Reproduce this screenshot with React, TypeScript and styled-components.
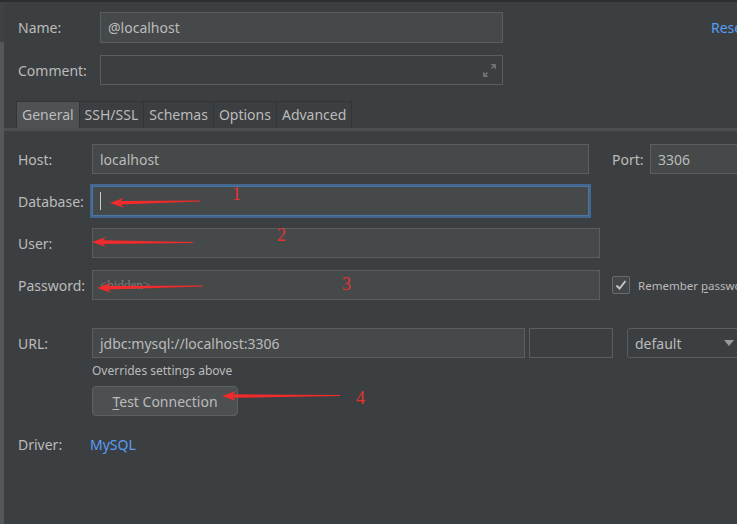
import styled, { createGlobalStyle } from "styled-components";

const GlobalStyle = createGlobalStyle`
  body {
    margin: 0;
    background: #3c3f41;
    overflow: hidden;
  }
`;

const Page = styled.div`
  position: relative;
  display: flex;
  width: 737px;
  height: 524px;
  box-sizing: border-box;
  border-top: 2px solid #2b2d2f;
  background: #3c3f41;
  overflow: hidden;
  font-family: "Noto Sans", "Open Sans", sans-serif;
  font-size: 14px;
  color: #bbbbbb;
`;

const ScrollStrip = styled.div`
  width: 4px;
  flex-shrink: 0;
  background: linear-gradient(#3f4244 0 40px, #55585a 40px);
`;

const Content = styled.div`
  flex: 1;
  min-width: 0;
  display: flex;
  flex-direction: column;
`;

const Header = styled.div`
  display: grid;
  grid-template-columns: 82px 403px auto;
  grid-template-rows: 31px 30px;
  row-gap: 12px;
  align-items: center;
  padding: 10px 0 0 14px;
`;

const ResetLink = styled.span`
  margin-left: 208px;
  color: #589df6;
  white-space: nowrap;
`;

const TabBar = styled.div`
  display: flex;
  margin-top: 16px;
  padding-left: 12px;
  border-bottom: 3px solid #4b4f51;
`;

const Tab = styled.div<{ $active?: boolean }>`
  height: 27px;
  box-sizing: border-box;
  display: flex;
  align-items: center;
  padding: 0 5px 2px;
  margin-right: -1px;
  border: 1px solid #323436;
  border-bottom: none;
  background: ${({ $active }) => ($active ? "#4e5254" : "#3c3f41")};
  white-space: nowrap;
`;

const Panel = styled.div`
  display: flex;
  flex-direction: column;
  padding: 13px 0 0 14px;
`;

const Row = styled.div<{ $top?: number; $h?: number }>`
  display: flex;
  align-items: center;
  height: ${({ $h }) => $h ?? 30}px;
  margin-top: ${({ $top }) => $top ?? 0}px;
  white-space: nowrap;
`;

const Label = styled.span<{ $w?: number }>`
  width: ${({ $w }) => $w ?? 74}px;
  flex-shrink: 0;
`;

const Field = styled.div<{
  $w: number;
  $h?: number;
  $flat?: boolean;
  $focus?: boolean;
  $left?: number;
  $end?: boolean;
}>`
  width: ${({ $w }) => $w}px;
  height: ${({ $h }) => $h ?? 30}px;
  flex-shrink: 0;
  box-sizing: border-box;
  display: flex;
  align-items: center;
  justify-content: ${({ $end }) => ($end ? "flex-end" : "flex-start")};
  margin-left: ${({ $left }) => $left ?? 0}px;
  padding: 0 ${({ $end }) => ($end ? 5 : 7)}px 0 7px;
  border: 1px solid ${({ $focus }) => ($focus ? "#4a76a2" : "#5b5e5f")};
  box-shadow: ${({ $focus }) => ($focus ? "0 0 0 2px #42668d" : "none")};
  background: ${({ $flat }) => ($flat ? "#3c3f41" : "#45494a")};
  color: #bbbbbb;
  white-space: nowrap;
  overflow: hidden;
`;

const Caret = styled.span`
  width: 1px;
  height: 18px;
  background: #c8c8c8;
`;

const Placeholder = styled.span`
  font-family: "Liberation Serif", "DejaVu Serif", serif;
  font-size: 13px;
  color: #7c7c7c;
`;

const SideLabel = styled.span<{ $left: number; $w?: number }>`
  margin-left: ${({ $left }) => $left}px;
  width: ${({ $w }) => ($w ? `${$w}px` : "auto")};
  flex-shrink: 0;
`;

const CheckBox = styled.div`
  width: 18px;
  height: 18px;
  margin-left: 12px;
  flex-shrink: 0;
  box-sizing: border-box;
  border: 1px solid #6b6b6b;
  border-radius: 2px;
  background: #43474a;
  display: flex;
  align-items: center;
  justify-content: center;
`;

const CheckText = styled.span`
  margin-left: 8px;
  font-size: 11.5px;
  u {
    text-underline-offset: 2px;
  }
`;

const Combo = styled.div`
  width: 118px;
  height: 30px;
  margin-left: 14px;
  flex-shrink: 0;
  box-sizing: border-box;
  display: flex;
  align-items: center;
  justify-content: space-between;
  padding: 0 10px 0 7px;
  border: 1px solid #5b5e5f;
  border-radius: 3px;
  background: #3c3f41;
`;

const Triangle = styled.span`
  width: 0;
  height: 0;
  border-left: 5px solid transparent;
  border-right: 5px solid transparent;
  border-top: 6px solid #9a9a9a;
`;

const Hint = styled.div`
  margin: 6px 0 0 74px;
  font-size: 12px;
  line-height: 14px;
`;

const Button = styled.div`
  width: 146px;
  height: 30px;
  margin: 8px 0 0 74px;
  box-sizing: border-box;
  display: flex;
  align-items: center;
  justify-content: center;
  border: 1px solid #5e6162;
  border-radius: 4px;
  background: #4c5052;
  u {
    text-underline-offset: 2px;
  }
`;

const Link = styled.span`
  margin-left: -2px;
  color: #589df6;
`;

const Overlay = styled.svg`
  position: absolute;
  left: 0;
  top: -2px;
  pointer-events: none;
`;

const Num = styled.text`
  font-family: "Liberation Serif", "DejaVu Serif", serif;
  font-size: 18px;
  fill: #e8312f;
`;

const arrowPoints = (tx: number, ty: number, sx: number, sy: number) => {
  const len = Math.hypot(sx - tx, sy - ty);
  const dx = (sx - tx) / len;
  const dy = (sy - ty) / len;
  const nx = -dy;
  const ny = dx;
  const p = (x: number, y: number, a: number, b: number) =>
    `${(x + dx * a + nx * b).toFixed(1)},${(y + dy * a + ny * b).toFixed(1)}`;
  return [
    p(tx, ty, 0, 0),
    p(tx, ty, 14, 5),
    p(tx, ty, 11, 1.8),
    p(sx, sy, 0, 0.4),
    p(sx, sy, 0, -0.4),
    p(tx, ty, 11, -1.8),
    p(tx, ty, 14, -5),
  ].join(" ");
};

// red annotations drawn over the form
const arrows = [
  { tip: [110, 203], tail: [200, 201] },
  { tip: [92, 242], tail: [193, 242.5] },
  { tip: [97, 288], tail: [203, 286] },
  { tip: [222, 396], tail: [340, 395.5] },
];

const numbers = [
  { n: "1", x: 232, y: 200 },
  { n: "2", x: 277, y: 241 },
  { n: "3", x: 342, y: 290 },
  { n: "4", x: 356, y: 404 },
];

const ExpandIcon = () => (
  <svg width="15" height="15" viewBox="0 0 15 15">
    <path d="M14 1 L8.5 1 L14 6.5 Z" fill="#707070" />
    <path d="M13 2 L9.5 5.5" stroke="#707070" strokeWidth="1.6" />
    <path d="M1 14 L6.5 14 L1 8.5 Z" fill="#707070" />
    <path d="M2 13 L5.5 9.5" stroke="#707070" strokeWidth="1.6" />
  </svg>
);

const CheckMark = () => (
  <svg width="14" height="14" viewBox="0 0 14 14">
    <path d="M2.5 7.5 L5.5 10.5 L11.5 3" fill="none" stroke="#c4c4c4" strokeWidth="2" />
  </svg>
);

export default function App() {
  return (
    <Page>
      <GlobalStyle />
      <ScrollStrip />
      <Content>
        <Header>
          <span>Name:</span>
          <Field $w={403} $h={31}>
            @localhost
          </Field>
          <ResetLink>Reset</ResetLink>
          <span>Comment:</span>
          <Field $w={403} $flat $end>
            <ExpandIcon />
          </Field>
        </Header>

        <TabBar>
          <Tab $active>General</Tab>
          <Tab>SSH/SSL</Tab>
          <Tab>Schemas</Tab>
          <Tab>Options</Tab>
          <Tab>Advanced</Tab>
        </TabBar>

        <Panel>
          <Row>
            <Label>Host:</Label>
            <Field $w={497}>localhost</Field>
            <SideLabel $left={23} $w={38}>
              Port:
            </SideLabel>
            <Field $w={100}>3306</Field>
          </Row>
          <Row $top={12}>
            <Label>Database:</Label>
            <Field $w={497} $focus>
              <Caret />
            </Field>
          </Row>
          <Row $top={12}>
            <Label>User:</Label>
            <Field $w={508} />
          </Row>
          <Row $top={12}>
            <Label>Password:</Label>
            <Field $w={508}>
              <Placeholder>&lt;hidden&gt;</Placeholder>
            </Field>
            <CheckBox>
              <CheckMark />
            </CheckBox>
            <CheckText>
              Remember <u>p</u>assword
            </CheckText>
          </Row>
          <Row $top={28}>
            <Label>URL:</Label>
            <Field $w={433}>jdbc:mysql://localhost:3306</Field>
            <Field $w={84} $flat $left={4} />
            <Combo>
              <span>default</span>
              <Triangle />
            </Combo>
          </Row>
          <Hint>Overrides settings above</Hint>
          <Button>
            <span>
              <u>T</u>est Connection
            </span>
          </Button>
          <Row $top={18} $h={20}>
            <Label>Driver:</Label>
            <Link>MySQL</Link>
          </Row>
        </Panel>
      </Content>

      <Overlay width="737" height="524" viewBox="0 0 737 524">
        {arrows.map((a, i) => (
          <polygon key={i} points={arrowPoints(a.tip[0], a.tip[1], a.tail[0], a.tail[1])} fill="#f02b2b" />
        ))}
        {numbers.map((t) => (
          <Num key={t.n} x={t.x} y={t.y}>
            {t.n}
          </Num>
        ))}
      </Overlay>
    </Page>
  );
}
